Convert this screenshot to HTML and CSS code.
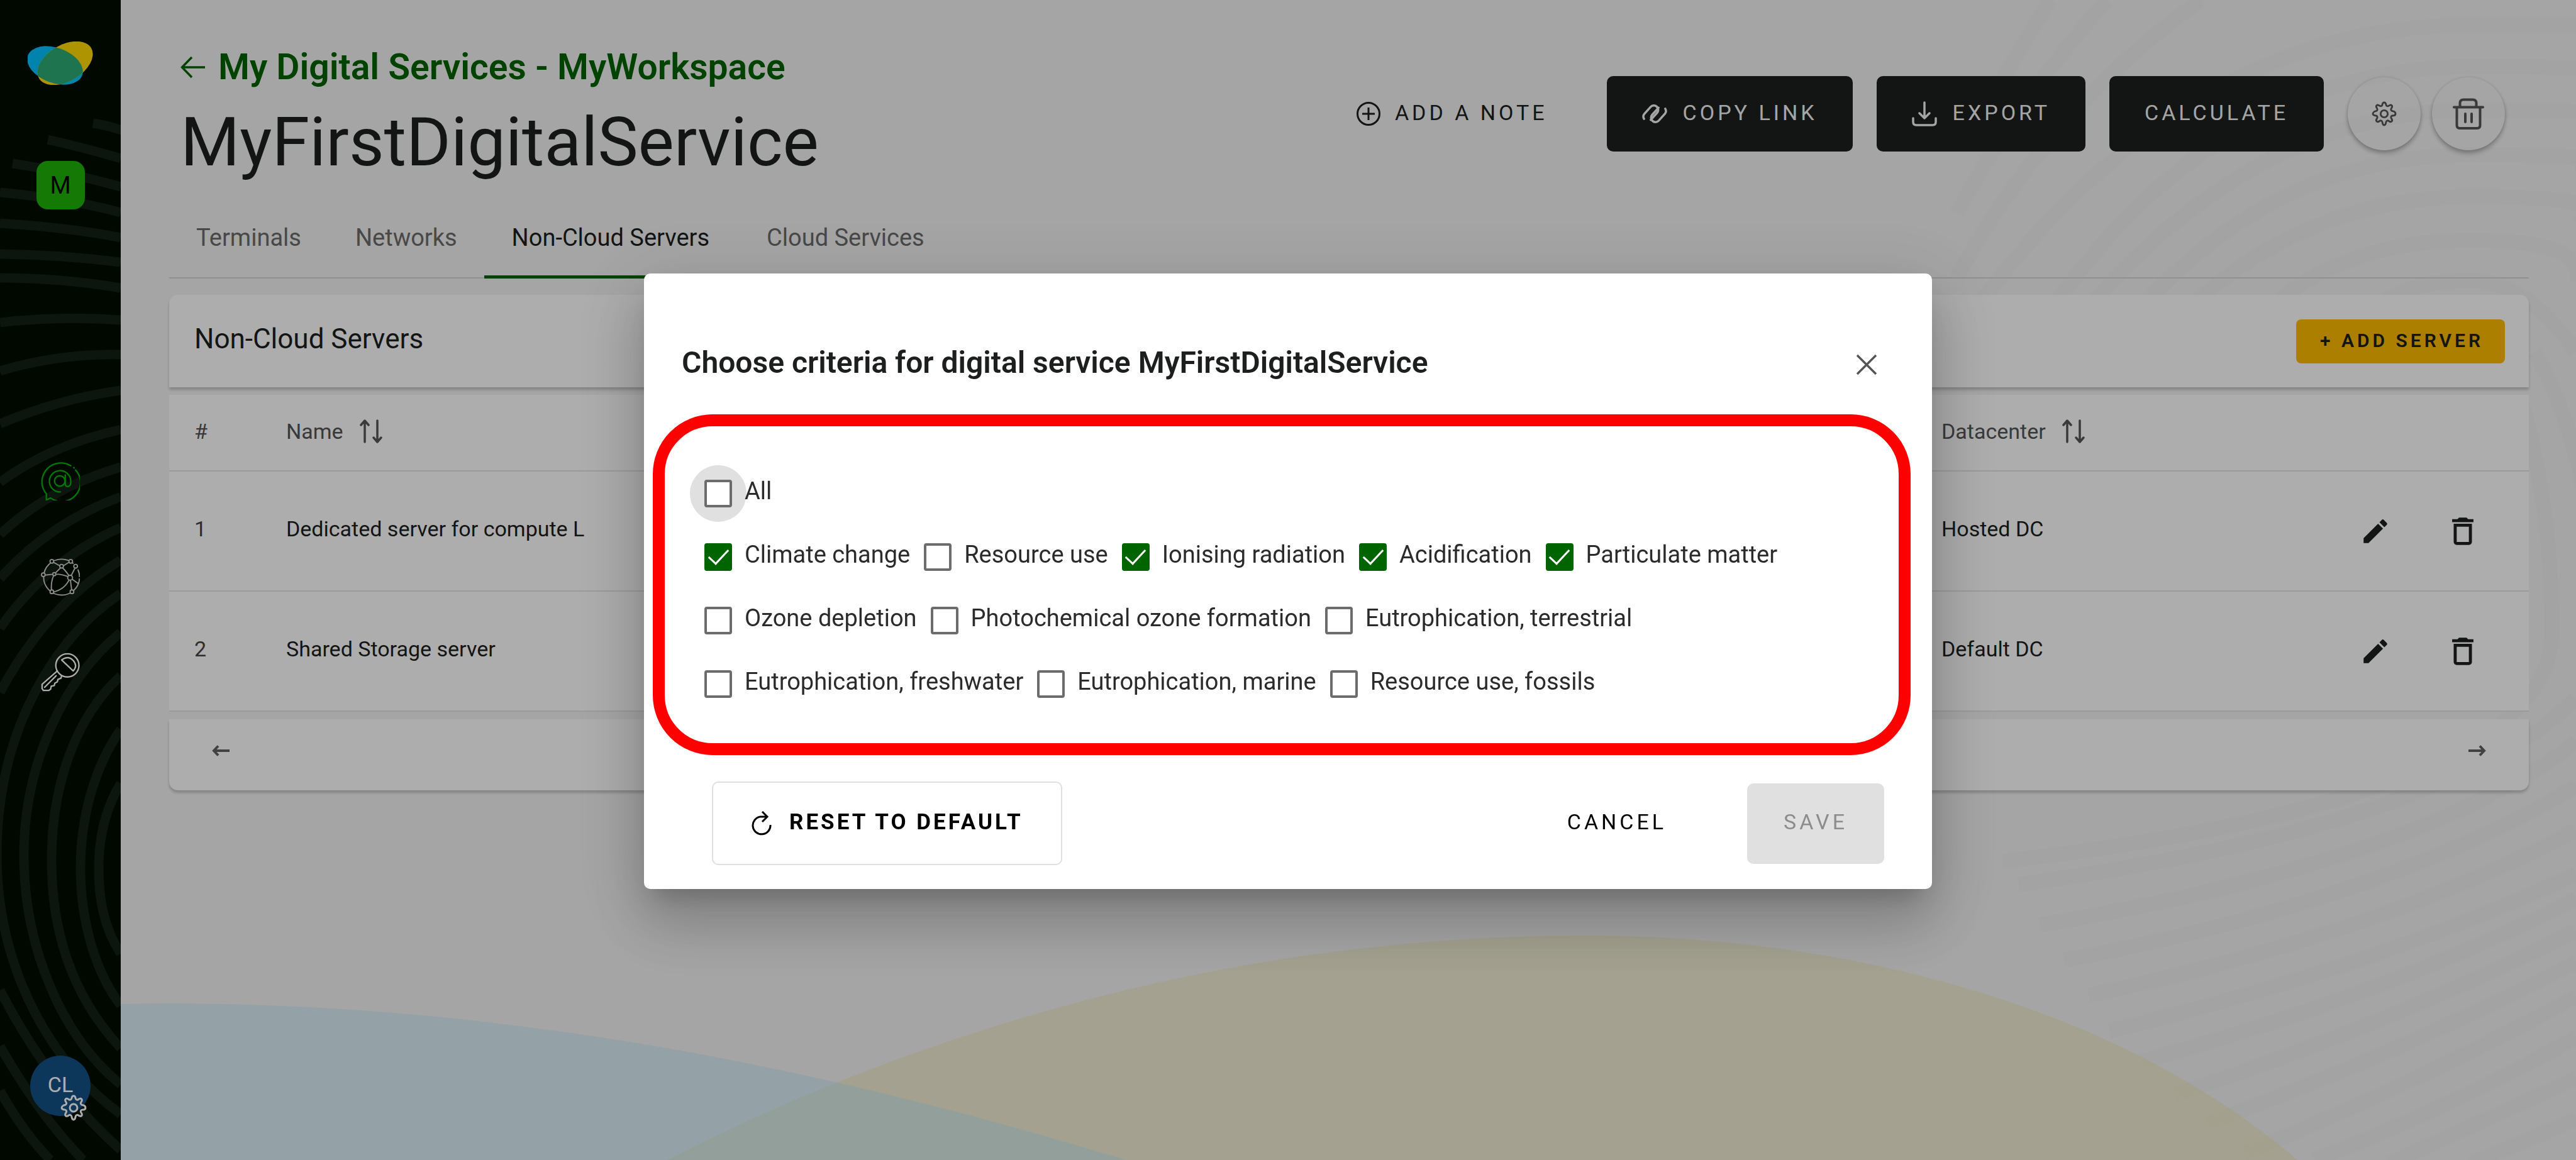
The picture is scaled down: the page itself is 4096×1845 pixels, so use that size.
FILE: index.html
```html
<!DOCTYPE html>
<html lang="en">
<head>
<meta charset="utf-8">
<meta name="viewport" content="width=device-width, initial-scale=1">
<title>MyFirstDigitalService</title>
<link rel="stylesheet" href="styles.css">
</head>
<body>
<svg width="0" height="0" class="defs" aria-hidden="true">
  <symbol id="gear" viewBox="0 0 24 24"><path fill="none" stroke="currentColor" stroke-width="1.7" stroke-linejoin="round" d="M12 1.2c1.5 0 1.6 1 1.8 2.2.2 1.200 1.500 1.700 2.500 1 1-.7 1.900-1.400 2.900-.4s.3 1.900-.4 2.900c-.7 1-.2 2.300 1 2.500 1.200.2 3 .4 3 2.600s-1.800 1.600-3 1.800c-1.200.2-1.700 1.500-1 2.500.7 1 1.400 1.900.4 2.900s-1.900.3-2.900-.4c-1-.7-2.300-.2-2.500 1-.2 1.200-.3 3-1.800 3s-1.600-1.800-1.800-3c-.2-1.200-1.500-1.700-2.500-1-1 .7-1.900 1.400-2.900.4s-.3-1.900.4-2.900c.7-1 .2-2.300-1-2.500-1.200-.2-3-.3-3-1.800s1.800-2.400 3-2.600c1.200-.2 1.700-1.500 1-2.500-.7-1-1.400-1.900-.4-2.900s1.900-.3 2.900.4c1 .7 2.300.2 2.500-1 .2-1.200.3-2.200 1.800-2.200z"/><circle cx="12" cy="12" r="3.400" fill="none" stroke="currentColor" stroke-width="1.700"/></symbol>
  <symbol id="sort" viewBox="0 0 36 38"><path fill="none" stroke="currentColor" stroke-width="3.500" stroke-linecap="round" stroke-linejoin="round" d="M8 36V3M2 9l6-7 6 7M28 2v33M22 29l6 7 6-7"/></symbol>
  <symbol id="pencil" viewBox="0 0 24 24"><path fill="currentColor" d="M3 17.250V21h3.750L17.810 9.940l-3.750-3.750L3 17.250zM20.710 7.040c.39-.39.39-1.020 0-1.410l-2.340-2.340a1 1 0 0 0-1.410 0l-1.830 1.830 3.750 3.750 1.830-1.830z"/></symbol>
  <symbol id="bin" viewBox="0 0 24 24"><path fill="currentColor" d="M6 19a2 2 0 0 0 2 2h8a2 2 0 0 0 2-2V7H6v12zM8 9h8v10H8V9zm7.500-5-1-1h-5l-1 1H5v2h14V4h-3.500z"/></symbol>
</svg>

<div class="app">
  <aside class="sidebar">
    <svg class="sidebar-art" viewBox="0 0 192 1845" preserveAspectRatio="none" aria-hidden="true">
      <path d="M148 196Q170 199 196 208M76 222Q130 234 192 252M20 260Q100 272 192 297M0 306Q110 316 192 338M0 355Q110 362 192 378M0 404Q96 405 192 417M0 442Q96 442 192 458M0 513Q96 502 192 509M0 590Q96 562 192 564M0 674Q96 634 192 621M0 767Q80 708 192 683M0 850Q80 775 192 743M0 920Q78 832 192 790M0 999Q76 890 192 839M0 1101Q76 960 192 891"/>
      <path d="M192 944C90 1010-5 1160-5 1359C-5 1550 90 1700 192 1772M192 1006C100 1080 38 1220 38 1359C38 1510 100 1650 192 1725M192 1075C120 1140 82 1250 82 1368C82 1490 120 1590 192 1667M192 1160C150 1220 128 1300 128 1382C128 1460 150 1545 192 1599M192 1246C165 1290 157 1340 157 1382C157 1430 165 1475 192 1517M0 1575Q80 1730 192 1829M0 1664Q60 1770 132 1845M0 1735Q36 1800 80 1845"/>
    </svg>
    <a class="logo" href="#" aria-label="Home">
      <svg viewBox="0 0 104 69" width="104" height="69">
        <clipPath id="blob"><ellipse cx="59.500" cy="34.500" rx="48" ry="29" transform="rotate(-30 59.500 34.500)"/></clipPath>
        <ellipse cx="43.500" cy="38" rx="46" ry="28" transform="rotate(20 43.500 38)" fill="#00c1ff"/>
        <ellipse cx="59.500" cy="34.500" rx="48" ry="29" transform="rotate(-30 59.500 34.500)" fill="#ffda00"/>
        <g clip-path="url(#blob)"><ellipse cx="43.500" cy="38" rx="46" ry="28" transform="rotate(20 43.500 38)" fill="#2eac77"/></g>
      </svg>
    </a>
    <a class="workspace" href="#">M</a>
    <nav class="side-nav">
      <a class="side-link active" href="#" aria-label="Digital services">
        <svg viewBox="0 0 64 64" fill="none" stroke="currentColor" stroke-width="2.400" stroke-linecap="round">
          <path d="M49 7A31 31 0 0 0 6 49L9 53V63L16 60A31 31 0 0 0 57 14M54 10l.5.5"/>
          <circle cx="31" cy="32" r="8.500"/><path d="M40 22v14q0 5 4 5t5-5V32A17.500 17.500 0 1 0 32 50"/>
        </svg>
      </a>
      <a class="side-link muted" href="#" aria-label="Information systems">
        <svg viewBox="0 0 64 64" fill="none" stroke="currentColor" stroke-width="2">
          <circle cx="34" cy="33" r="29.500" stroke-dasharray="158 12 15" stroke-dashoffset="-2"/>
          <path d="M18 7L34 16L49 7M34 16L22 28L4 30M34 16Q44 26 48 34L57 16M22 28Q38 28 48 34M22 28Q15 42 18 58Q40 54 48 34M48 34L62 44M48 34L51 58"/>
          <g fill="#000d00"><circle cx="18" cy="7" r="3"/><circle cx="49" cy="7" r="3"/><circle cx="34" cy="15" r="3"/><circle cx="57" cy="15" r="3"/><circle cx="4" cy="29" r="3"/><circle cx="22" cy="28" r="2.500"/><circle cx="48" cy="34" r="4"/><circle cx="18" cy="57" r="3"/><circle cx="51" cy="57" r="3"/></g>
        </svg>
      </a>
      <a class="side-link" href="#" aria-label="Administration">
        <svg viewBox="0 0 64 64" fill="none" stroke="currentColor" stroke-width="2.400" stroke-linejoin="round" stroke-linecap="round">
          <circle cx="43.500" cy="21" r="19"/><path d="M34 12Q45 4 53 13T53 30ZM27 30L2 52V59L4 62H13L16 60L17 55L22 54L23 50L27 48L28 44L33 42L34 38M25 38L6 57"/>
        </svg>
      </a>
    </nav>
    <a class="account" href="#">CL<svg class="account-gear"><use href="#gear"/></svg></a>
  </aside>

  <main class="main">
    <svg class="main-art" viewBox="192 0 3904 1845" preserveAspectRatio="none" aria-hidden="true">
      <g class="rings">
        <path d="M3790 480Q3840 446 3929 446T4096 560M3620 480Q3740 382 3929 382T4096 450M3491 480Q3680 313 3929 313T4096 355M3413 480Q3630 246 3929 246T4096 275M3328 480Q3600 175 3929 175T4096 200M3270 480Q3540 106 3929 106T4096 125M3150 480Q3480 40 3929 40T4096 50M3112 440Q3260 170 3500 0M3112 340Q3200 170 3350 0M3135 220Q3190 110 3260 0"/>
        <path d="M4010 640Q4060 820 4057 1017Q4040 1270 3184 1370M4030 560Q4100 680 4130 900M3210 1407Q3900 1310 4096 1110M3243 1471Q3850 1370 4096 1180M3282 1527Q3800 1430 4096 1250M3321 1583Q3800 1480 4096 1320M3354 1640Q3800 1530 4096 1390M3406 1688Q3800 1580 4096 1430M3458 1741Q3800 1630 4096 1480M3511 1786Q3830 1670 4096 1530M3569 1834Q3850 1720 4096 1585M3680 1845Q3900 1760 4096 1650M3800 1850L4096 1715M3930 1850L4096 1780"/>
      </g>
      <path class="hill-yellow" d="M1061 1845C1500 1620 2000 1488 2518 1488C2960 1488 3380 1610 3653 1845Z"/>
      <path class="hill-blue" d="M192 1597Q226 1596 261 1596C800 1596 1295 1694 1790 1845H192Z"/>
    </svg>

    <header class="page-head">
      <div class="heading">
        <a class="crumb" href="#">
          <svg width="40" height="36" viewBox="0 0 40 36"><path fill="none" stroke="currentColor" stroke-width="3.500" d="M39 18H3M18 2L2.500 18L18 34"/></svg>
          My Digital Services - MyWorkspace
        </a>
        <h1 class="title">MyFirstDigitalService</h1>
      </div>
      <div class="actions">
        <button class="btn btn-flat" type="button">
          <svg width="40" height="40" viewBox="0 0 40 40" fill="none" stroke="currentColor" stroke-width="3"><circle cx="20" cy="20" r="17.500"/><path d="M20 10v20M10 20h20"/></svg>
          <span>ADD A NOTE</span>
        </button>
        <button class="btn btn-dark" type="button">
          <svg width="40" height="40" viewBox="0 0 40 40" fill="none" stroke="currentColor" stroke-width="3.500" stroke-linecap="round"><g transform="translate(14 19) rotate(42)"><path d="M7 8V-7A7 7 0 0 0-7-7V8A7 7 0 0 0-2 14"/></g><g transform="translate(26 21) rotate(222)"><path d="M7 8V-7A7 7 0 0 0-7-7V8A7 7 0 0 0-2 14"/></g></svg>
          <span>COPY LINK</span>
        </button>
        <button class="btn btn-dark" type="button">
          <svg width="40" height="40" viewBox="0 0 40 40" fill="none" stroke="currentColor" stroke-width="3.500" stroke-linecap="round" stroke-linejoin="round"><path d="M20 2v24M12 19l8 8 8-8M2 27v6q0 5 5 5h26q5 0 5-5V27"/></svg>
          <span>EXPORT</span>
        </button>
        <button class="btn btn-dark" type="button"><span>CALCULATE</span></button>
        <div class="round-group">
          <button class="round" type="button" aria-label="Settings"><svg width="40" height="40"><use href="#gear"/></svg></button>
          <button class="round" type="button" aria-label="Delete"><svg width="50" height="50" viewBox="0 0 50 50" fill="none" stroke="currentColor" stroke-width="4" stroke-linecap="round"><path d="M2 14.500H48M11.500 14V8Q11.500 2.500 17 2.500H32Q37.500 2.500 37.500 8V14M6.500 15V43Q6.500 48 11 48H39Q43.500 48 43.500 43V15M20 25V38M30 25V38"/></svg></button>
        </div>
      </div>
    </header>

    <nav class="tabs">
      <a class="tab" href="#">Terminals</a>
      <a class="tab" href="#">Networks</a>
      <a class="tab current" href="#" aria-current="page">Non-Cloud Servers</a>
      <a class="tab" href="#">Cloud Services</a>
    </nav>

    <section class="panel">
      <div class="panel-head">
        <h2 class="panel-title">Non-Cloud Servers</h2>
        <button class="btn-add" type="button">+ ADD SERVER</button>
      </div>
      <table class="servers">
        <thead>
          <tr>
            <th class="col-num">#</th>
            <th class="col-name"><span class="sortable">Name <svg width="36" height="38"><use href="#sort"/></svg></span></th>
            <th class="col-dc"><span class="sortable">Datacenter <svg width="36" height="38"><use href="#sort"/></svg></span></th>
            <th class="col-act"></th>
          </tr>
        </thead>
        <tbody>
          <tr>
            <td class="num">1</td><td>Dedicated server for compute L</td><td>Hosted DC</td>
            <td class="act"><div class="row-actions"><button class="icon-btn" type="button" aria-label="Edit"><svg class="ic-pencil"><use href="#pencil"/></svg></button><button class="icon-btn" type="button" aria-label="Delete"><svg class="ic-bin"><use href="#bin"/></svg></button></div></td>
          </tr>
          <tr>
            <td class="num">2</td><td>Shared Storage server</td><td>Default DC</td>
            <td class="act"><div class="row-actions"><button class="icon-btn" type="button" aria-label="Edit"><svg class="ic-pencil"><use href="#pencil"/></svg></button><button class="icon-btn" type="button" aria-label="Delete"><svg class="ic-bin"><use href="#bin"/></svg></button></div></td>
          </tr>
        </tbody>
      </table>
      <div class="pager">
        <button class="page-btn" type="button" aria-label="Previous"><svg width="28" height="18" viewBox="0 0 28 18" fill="none" stroke="currentColor" stroke-width="4"><path d="M28 9H4M10 1.500L3 9L10 16.500"/></svg></button>
        <button class="page-btn" type="button" aria-label="Next"><svg width="28" height="18" viewBox="0 0 28 18" fill="none" stroke="currentColor" stroke-width="4"><path d="M0 9H24M18 1.500L25 9L18 16.500"/></svg></button>
      </div>
    </section>
  </main>
</div>

<div class="backdrop">
  <div class="dialog" role="dialog" aria-modal="true" aria-labelledby="dialog-title">
    <div class="dialog-head">
      <h2 class="dialog-title" id="dialog-title">Choose criteria for digital service MyFirstDigitalService</h2>
      <button class="close" type="button" aria-label="Close"><svg width="34" height="34" viewBox="0 0 34 34" fill="none" stroke="currentColor" stroke-width="3.500"><path d="M2 2L32 32M32 2L2 32"/></svg></button>
    </div>
    <fieldset class="criteria">
      <div class="row"><label class="opt hover"><input type="checkbox"><span>All</span></label></div>
      <div class="row">
        <label class="opt"><input type="checkbox" checked><span>Climate change</span></label>
        <label class="opt"><input type="checkbox"><span>Resource use</span></label>
        <label class="opt"><input type="checkbox" checked><span>Ionising radiation</span></label>
        <label class="opt"><input type="checkbox" checked><span>Acidification</span></label>
        <label class="opt"><input type="checkbox" checked><span>Particulate matter</span></label>
      </div>
      <div class="row">
        <label class="opt"><input type="checkbox"><span>Ozone depletion</span></label>
        <label class="opt"><input type="checkbox"><span>Photochemical ozone formation</span></label>
        <label class="opt"><input type="checkbox"><span>Eutrophication, terrestrial</span></label>
      </div>
      <div class="row">
        <label class="opt"><input type="checkbox"><span>Eutrophication, freshwater</span></label>
        <label class="opt"><input type="checkbox"><span>Eutrophication, marine</span></label>
        <label class="opt"><input type="checkbox"><span>Resource use, fossils</span></label>
      </div>
    </fieldset>
    <div class="dialog-foot">
      <button class="foot-btn reset" type="button">
        <svg width="34" height="40" viewBox="0 0 34 40" fill="none" stroke="currentColor" stroke-width="3"><path d="M26 9H15A14 14 0 1 0 31 22M18 1L26 9L18 17"/></svg>
        <span>RESET TO DEFAULT</span>
      </button>
      <div class="foot-right">
        <button class="foot-btn cancel" type="button"><span>CANCEL</span></button>
        <button class="foot-btn save" type="button" disabled><span>SAVE</span></button>
      </div>
    </div>
  </div>
</div>
</body>
</html>
```
FILE: styles.css
```css
* { box-sizing: border-box; }
body {
  margin: 0;
  font-family: Roboto, "Liberation Sans", sans-serif;
  font-size: 34px;
  color: #1c1f1e;
  background: #f4f4f4;
}
a { color: inherit; text-decoration: none; }
button {
  font: inherit;
  color: inherit;
  background: none;
  border: 0;
  padding: 0;
  cursor: pointer;
}
h1, h2 { margin: 0; font-weight: 400; }
svg { flex: none; }
.defs { position: absolute; }

.app { display: flex; min-height: 100vh; }

/* Sidebar */
.sidebar {
  position: relative;
  flex: 0 0 192px;
  display: flex;
  flex-direction: column;
  align-items: center;
  padding: 66px 0 70px;
  background: #000d00;
}
.sidebar-art { position: absolute; inset: 0; width: 100%; height: 100%; fill: none; stroke: #131f15; stroke-width: 15; }
.logo, .workspace, .side-nav, .account { position: relative; }
.logo { display: flex; }
.workspace {
  display: flex;
  align-items: center;
  justify-content: center;
  width: 77px;
  height: 77px;
  margin-top: 121px;
  border-radius: 18px;
  background: #20b30a;
  color: #000;
  font-size: 38px;
}
.side-nav { display: flex; flex-direction: column; gap: 90px; margin-top: 401px; }
.side-link { display: flex; color: #fff; }
.side-link svg { width: 62px; height: 62px; }
.side-link.active { color: #00b000; }
.side-link.muted { color: #ccc; }
.account {
  display: flex;
  align-items: center;
  justify-content: center;
  width: 96px;
  height: 96px;
  margin-top: auto;
  padding-bottom: 4px;
  border-radius: 50%;
  background: #125187;
  color: #fff;
  font-size: 34px;
}
.account-gear { position: absolute; right: 6px; bottom: -8px; width: 42px; height: 42px; }

/* Page */
.main { position: relative; flex: 1; min-width: 0; padding: 71px 75px 0 77px; }
.main > * { position: relative; }
.main > .main-art { position: absolute; inset: 0; width: 100%; height: 100%; }
.rings { fill: none; stroke: #f0f0f0; stroke-width: 24; }
.hill-yellow { fill: #f1e6a4; fill-opacity: .4; }
.hill-blue { fill: #b7e4f9; fill-opacity: .42; }

.page-head { display: flex; justify-content: space-between; align-items: flex-start; padding: 0 38px 0 18px; }
.crumb { display: flex; align-items: center; gap: 20px; font-size: 57px; font-weight: 600; line-height: 72px; color: #006400; }
.title { padding-top: 21px; font-size: 108px; line-height: 124px; }
.actions { display: flex; align-items: center; gap: 38px; margin-top: 50px; }
.btn {
  display: flex;
  align-items: center;
  gap: 25px;
  height: 120px;
  padding: 0 56px;
  border-radius: 10px;
  font-size: 34px;
  letter-spacing: 5px;
}
.btn span, .foot-btn span { padding-bottom: 5px; }
.btn-flat { gap: 22px; }
.btn-dark { background: #1c1f1e; color: #f4f4f4; }
.round-group { display: flex; gap: 18px; }
.round {
  display: flex;
  align-items: center;
  justify-content: center;
  width: 116px;
  height: 116px;
  border-radius: 50%;
  color: #555;
  box-shadow: 0 5px 7px rgba(0, 0, 0, .25), 0 0 5px rgba(0, 0, 0, .12);
}

.tabs { display: flex; margin-top: 25px; border-bottom: 2px solid #d4d4d4; }
.tab { padding: 0 43px; font-size: 38px; line-height: 130px; color: #6a6a6a; margin-bottom: -2px; }
.tab.current { padding: 0 48px 0 44px; color: #1c1f1e; box-shadow: inset 0 -5px 0 #006400; }

.panel { margin-top: 26px; }
.panel-head, .pager { display: flex; align-items: center; justify-content: space-between; background: #fff; box-shadow: 0 4px 4px rgba(0, 0, 0, .2); }
.panel-head { height: 147px; padding: 0 38px 0 40px; border-radius: 14px 14px 0 0; }
.panel-title { font-size: 44px; padding-bottom: 8px; }
.btn-add { height: 70px; padding: 0 34px 3px 38px; border-radius: 8px; background: #ffbc00; font-size: 30px; font-weight: 600; letter-spacing: 5px; }
.servers { width: 100%; margin-top: 12px; border-collapse: collapse; background: #fff; table-layout: fixed; }
.servers th, .servers td { padding: 0 0 5px 40px; border-bottom: 2px solid #e4e4e4; text-align: left; font-weight: 400; }
.servers th { height: 121px; color: #555; }
.servers td { height: 191px; padding-bottom: 7px; }
.servers .act { padding-bottom: 0; }
.servers .num { color: #444; }
.col-num { width: 146px; }
.col-dc { width: 520px; }
.col-act { width: 454px; }
.sortable { display: flex; align-items: center; gap: 26px; }
.row-actions { display: flex; justify-content: flex-end; gap: 43px; padding-right: 57px; }
.icon-btn { display: flex; align-items: center; justify-content: center; width: 96px; height: 96px; }
.ic-pencil { width: 50px; height: 50px; }
.ic-bin { width: 58px; height: 58px; }
.pager { height: 113px; margin-top: 12px; padding: 0 68px; border-radius: 0 0 14px 14px; color: #606060; }
.page-btn { display: flex; padding-bottom: 14px; }

/* Dialog */
.backdrop {
  position: fixed;
  inset: 0;
  display: flex;
  align-items: center;
  justify-content: center;
  padding-top: 4px;
  background: rgba(0, 0, 0, .32);
}
.dialog {
  width: 50%;
  border-radius: 10px;
  background: #fff;
  box-shadow: 0 26px 36px -16px rgba(0, 0, 0, .2), 0 58px 92px 8px rgba(0, 0, 0, .14), 0 22px 112px 20px rgba(0, 0, 0, .12);
}
.dialog-head { display: flex; justify-content: space-between; align-items: center; height: 224px; padding: 58px 87px 0 60px; }
.dialog-title { font-size: 48px; font-weight: 600; }
.close { display: flex; padding-top: 8px; color: #555; }
.criteria {
  margin: 0 34px 0 14px;
  padding: 56px 63px 44px;
  border: 19px solid #f00;
  border-radius: 95px;
  min-width: 0;
}
.row { display: flex; gap: 22px; height: 101px; align-items: center; }
.opt { position: relative; display: flex; align-items: center; gap: 20px; font-size: 38px; color: #2b2b2b; white-space: nowrap; cursor: pointer; }
.opt span { position: relative; padding-bottom: 8px; }
.opt input {
  appearance: none;
  position: relative;
  flex: none;
  display: flex;
  align-items: center;
  justify-content: center;
  width: 44px;
  height: 44px;
  margin: 0;
  border: 4px solid #6c6c6c;
  border-radius: 4px;
  background: #fff;
}
.opt input:checked { background: #006400; border-color: #006400; }
.opt input:checked::after {
  content: "";
  width: 28px;
  height: 14px;
  margin-bottom: 8px;
  border: solid #fff;
  border-width: 0 0 3px 3px;
  transform: rotate(-47deg);
}
.opt.hover::before {
  content: "";
  position: absolute;
  left: -23px;
  top: 50%;
  width: 90px;
  height: 90px;
  margin-top: -45px;
  border-radius: 50%;
  background: #e0e0e0;
}
.dialog-foot { display: flex; justify-content: space-between; align-items: center; padding: 42px 76px 38px 108px; }
.foot-right { display: flex; align-items: center; gap: 70px; }
.foot-btn { display: flex; align-items: center; height: 128px; border-radius: 10px; padding: 0 58px; font-size: 34px; letter-spacing: 5px; color: #000; }
.reset { gap: 27px; height: 133px; padding: 0 60px; border: 2px solid #e0e0e0; font-size: 35px; font-weight: 700; letter-spacing: 4px; }
.save { background: #e0e0e0; color: #8c8c8c; }
```
